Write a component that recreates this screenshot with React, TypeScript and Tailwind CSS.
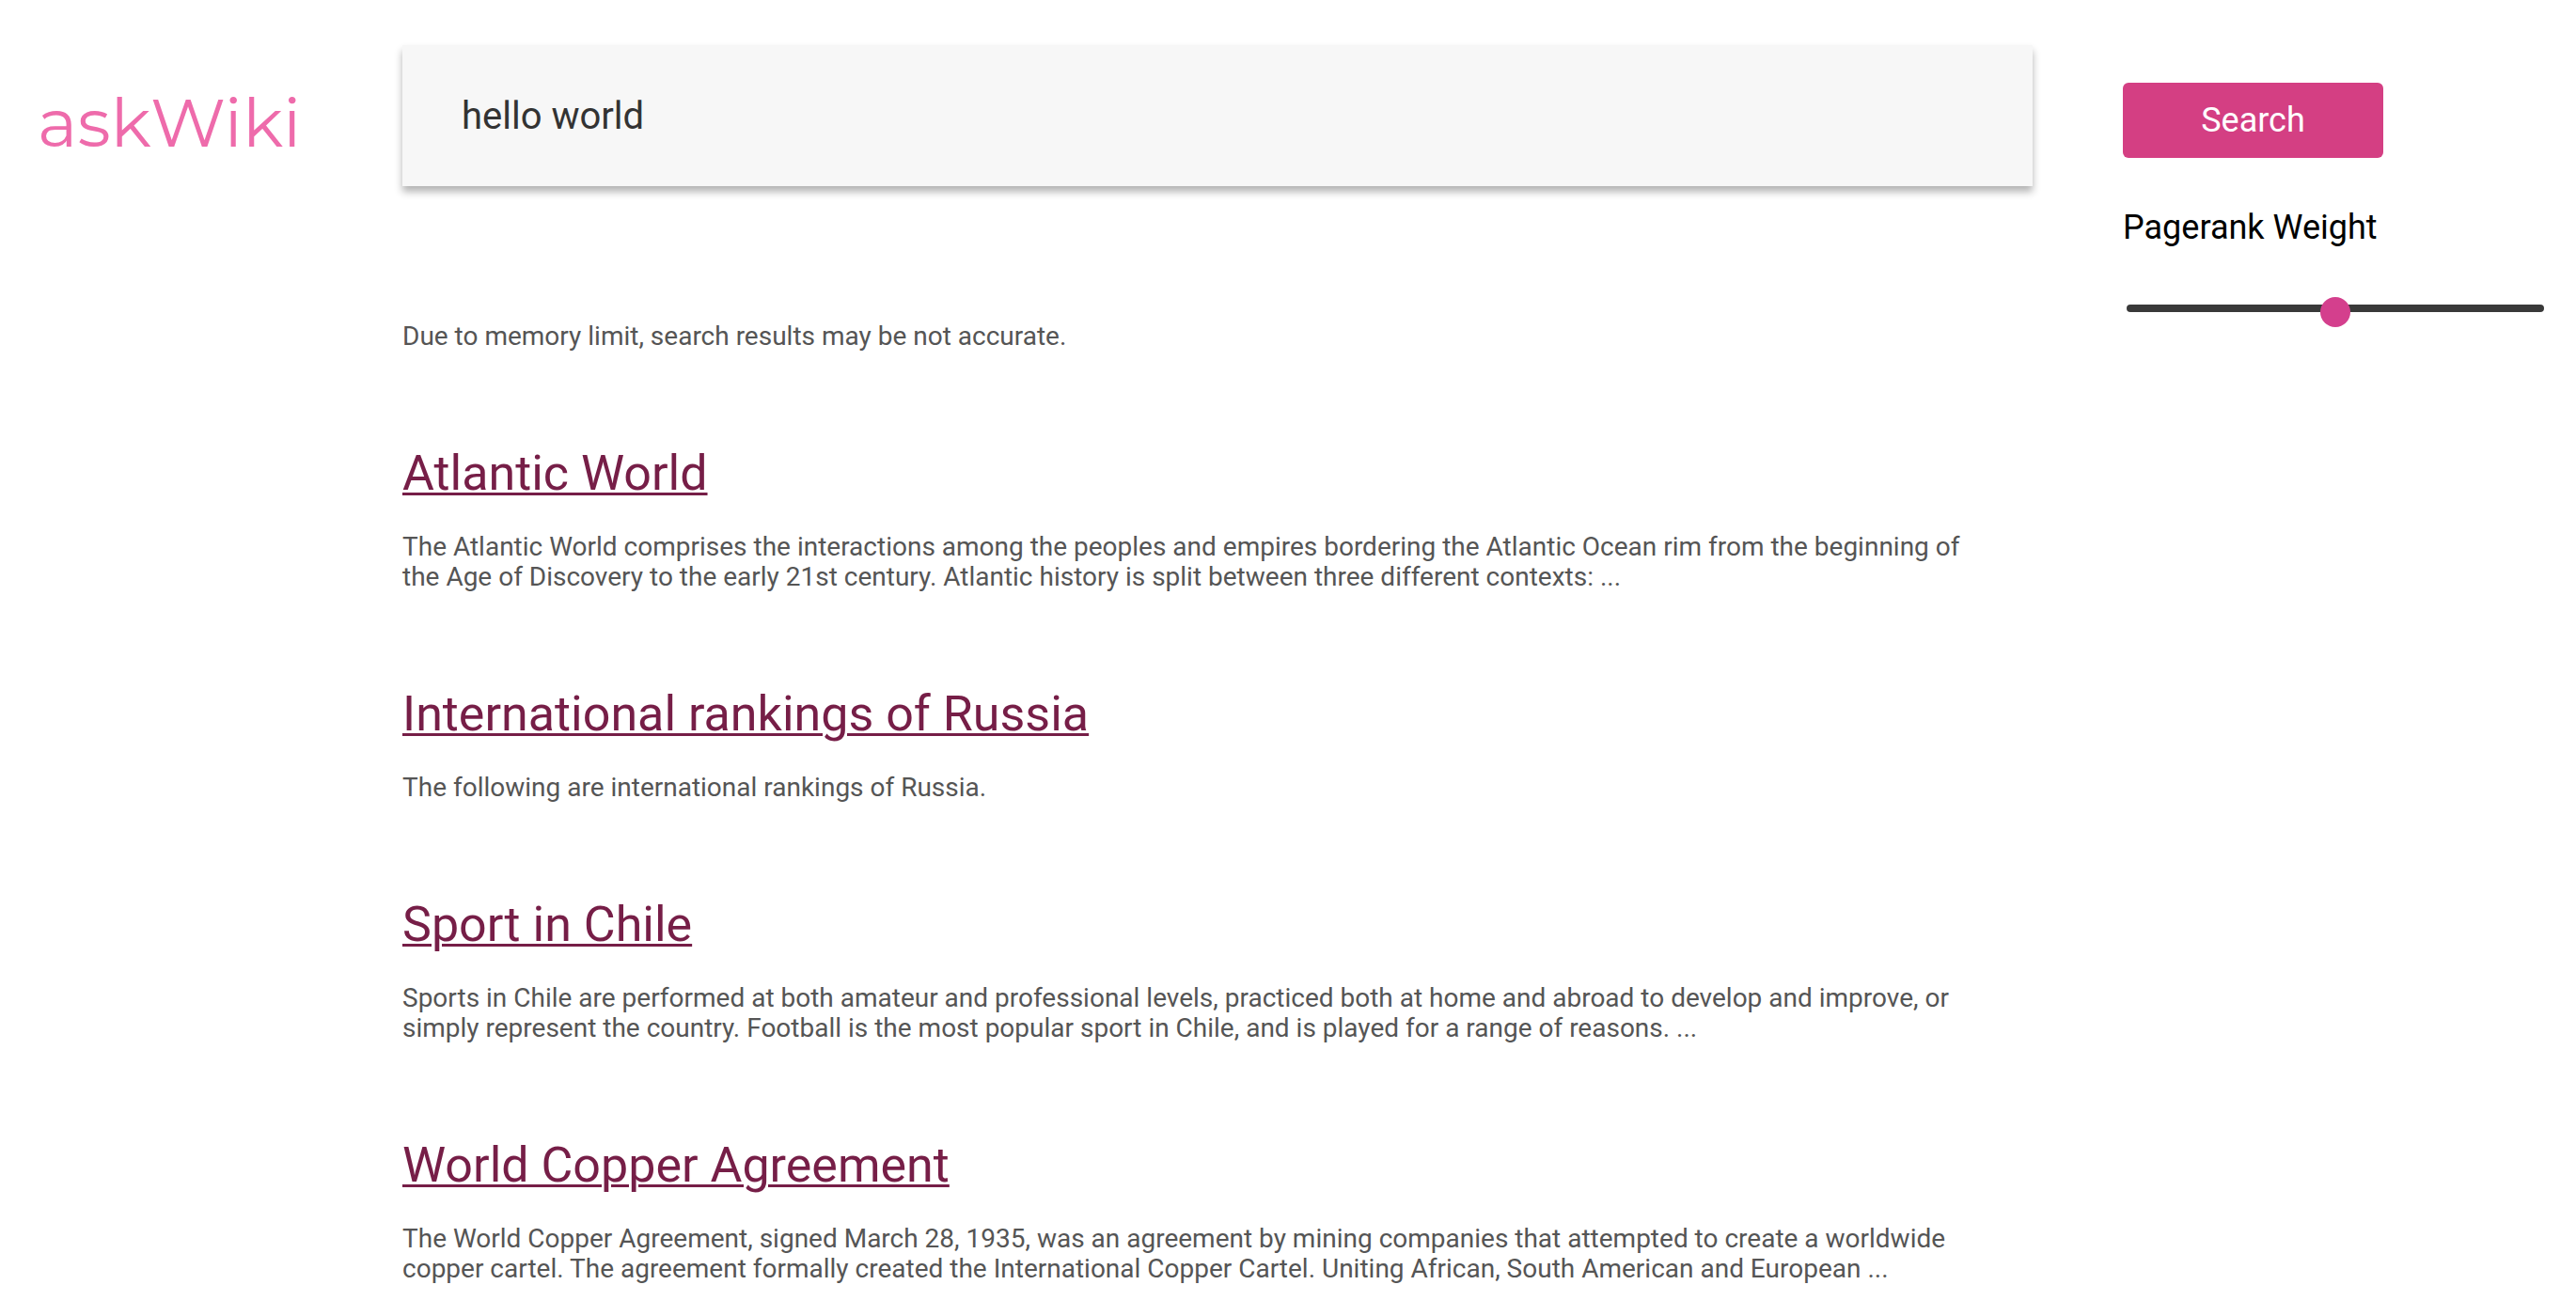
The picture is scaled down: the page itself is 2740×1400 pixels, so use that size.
import { useState } from "react";

const results = [
  {
    title: "Atlantic World",
    text: "The Atlantic World comprises the interactions among the peoples and empires bordering the Atlantic Ocean rim from the beginning of the Age of Discovery to the early 21st century. Atlantic history is split between three different contexts: ...",
  },
  {
    title: "International rankings of Russia",
    text: "The following are international rankings of Russia.",
  },
  {
    title: "Sport in Chile",
    text: "Sports in Chile are performed at both amateur and professional levels, practiced both at home and abroad to develop and improve, or simply represent the country. Football is the most popular sport in Chile, and is played for a range of reasons. ...",
  },
  {
    title: "World Copper Agreement",
    text: "The World Copper Agreement, signed March 28, 1935, was an agreement by mining companies that attempted to create a worldwide copper cartel. The agreement formally created the International Copper Cartel. Uniting African, South American and European ...",
  },
];

export default function App() {
  const [query, setQuery] = useState("hello world");
  const [weight, setWeight] = useState(50);

  return (
    <div className="grid min-h-screen grid-cols-[428fr_1734fr_578fr] bg-white font-['Roboto',sans-serif] text-black">
      <header className="pt-[84px] pl-10">
        <a href="#home" className="block font-['Montserrat','Inter',sans-serif] text-7xl leading-[92px] text-[#ee6bab]">
          askWiki
        </a>
      </header>

      <main className="min-w-0 pt-12 pb-6">
        <form id="search" onSubmit={(e) => e.preventDefault()}>
          <input
            type="text"
            aria-label="Search query"
            value={query}
            onChange={(e) => setQuery(e.target.value)}
            className="block h-[150px] w-full bg-[#f7f7f7] px-[63px] text-[40px] leading-12 text-[#333333] shadow-[0_6px_8px_rgba(0,0,0,0.3)] outline-none"
          />
        </form>
        <div className="mt-36 flex flex-col gap-[100px] pr-[60px] text-[28px] leading-8 text-[#555555]">
          <p>Due to memory limit, search results may be not accurate.</p>
          {results.map((r) => (
            <article key={r.title} className="flex flex-col gap-8">
              <h2 className="text-[52px] leading-[60px]">
                <a href="#result" className="text-[#761e47] underline decoration-[3px] underline-offset-[3px]">
                  {r.title}
                </a>
              </h2>
              <p>{r.text}</p>
            </article>
          ))}
        </div>
      </main>

      <aside className="flex flex-col items-start pt-[88px] pr-[34px] pl-24 text-4xl">
        <button type="submit" form="search" className="h-20 w-[277px] rounded-md bg-[#d43f83] text-white">
          Search
        </button>
        <label htmlFor="weight" className="mt-[54px] block leading-10">
          Pagerank Weight
        </label>
        <div className="mt-[50px] w-full pl-1">
          <input
            id="weight"
            type="range"
            min={0}
            max={100}
            value={weight}
            onChange={(e) => setWeight(Number(e.target.value))}
            className="block h-8 w-full appearance-none bg-transparent [&::-webkit-slider-runnable-track]:h-2 [&::-webkit-slider-runnable-track]:rounded-full [&::-webkit-slider-runnable-track]:bg-[#393939] [&::-webkit-slider-thumb]:-mt-2 [&::-webkit-slider-thumb]:size-8 [&::-webkit-slider-thumb]:appearance-none [&::-webkit-slider-thumb]:rounded-full [&::-webkit-slider-thumb]:bg-[#d43f8d]"
          />
        </div>
      </aside>
    </div>
  );
}
